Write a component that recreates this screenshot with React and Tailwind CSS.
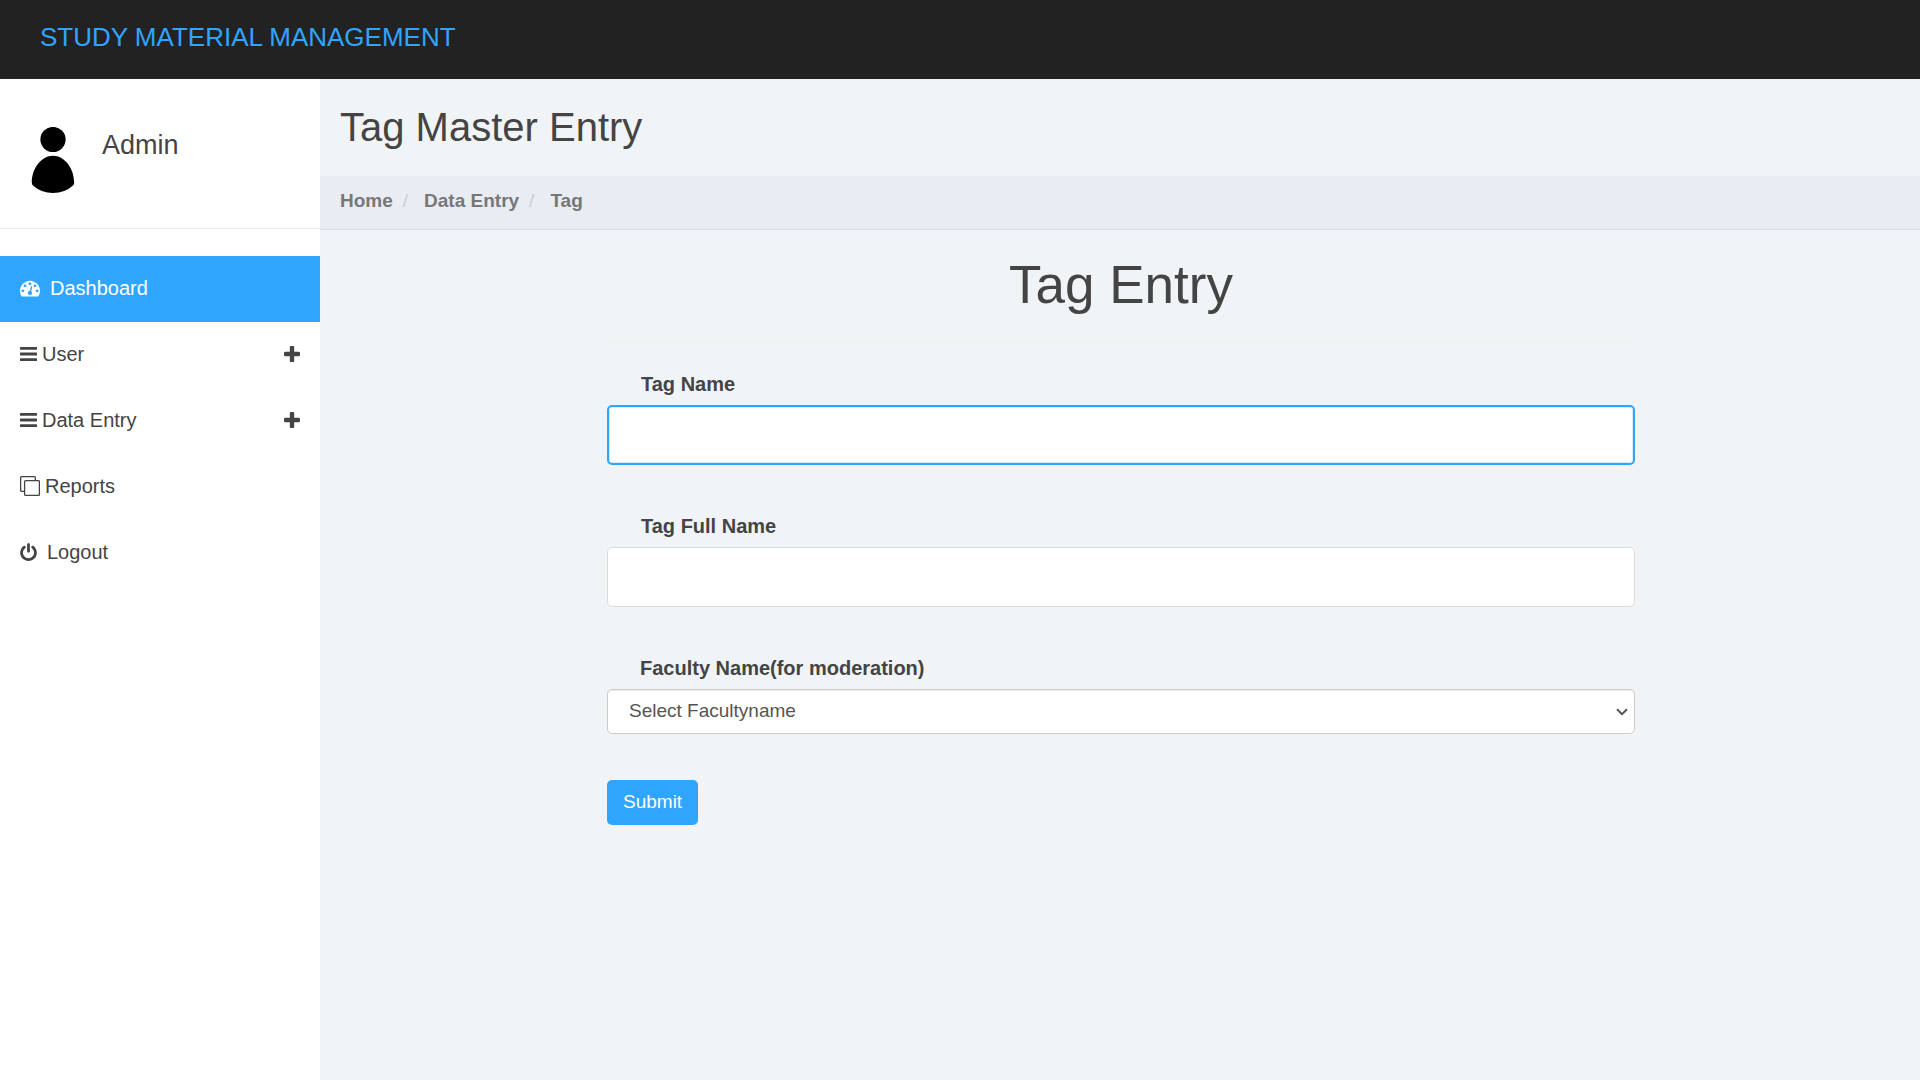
import React from "react";

function DashboardIcon() {
  return (
    <svg viewBox="0 0 1792 1792" className="mr-2.5 size-5 fill-current" aria-hidden="true">
      <path d="M384 1152q0-53-37.5-90.5t-90.5-37.5-90.5 37.5-37.5 90.5 37.5 90.5 90.5 37.5 90.5-37.5 37.5-90.5zm192-448q0-53-37.5-90.5t-90.5-37.5-90.5 37.5-37.5 90.5 37.5 90.5 90.5 37.5 90.5-37.5 37.5-90.5zm428 481l101-382q6-26-7.5-48.5t-38.5-29.5-48 6.5-30 39.5l-101 382q-60 5-107 43.5t-63 98.5q-20 77 20 146t117 89 146-20 89-117q16-60-6-117t-72-91zm660-33q0-53-37.5-90.5t-90.5-37.5-90.5 37.5-37.5 90.5 37.5 90.5 90.5 37.5 90.5-37.5 37.5-90.5zm-640-640q0-53-37.5-90.5t-90.5-37.5-90.5 37.5-37.5 90.5 37.5 90.5 90.5 37.5 90.5-37.5 37.5-90.5zm448 192q0-53-37.5-90.5t-90.5-37.5-90.5 37.5-37.5 90.5 37.5 90.5 90.5 37.5 90.5-37.5 37.5-90.5zm320 448q0 261-141 483-19 29-54 29h-1402q-35 0-54-29-141-221-141-483 0-182 71-348t191-286 286-191 348-71 348 71 286 191 191 286 71 348z" />
    </svg>
  );
}

function BarsIcon() {
  return (
    <svg viewBox="0 0 17 14" className="mr-[5px] h-3.5 w-[17px] fill-current" aria-hidden="true">
      <rect y="0" width="17" height="2.8" rx="0.5" />
      <rect y="5.6" width="17" height="2.8" rx="0.5" />
      <rect y="11.2" width="17" height="2.8" rx="0.5" />
    </svg>
  );
}

function PlusIcon() {
  return (
    <svg viewBox="192 128 1408 1408" className="ml-auto size-4 fill-current" aria-hidden="true">
      <path d="M1600 736v192q0 40-28 68t-68 28h-416v416q0 40-28 68t-68 28h-192q-40 0-68-28t-28-68v-416h-416q-40 0-68-28t-28-68v-192q0-40 28-68t68-28h416v-416q0-40 28-68t68-28h192q40 0 68 28t28 68v416h416q40 0 68 28t28 68z" />
    </svg>
  );
}

function CloneIcon() {
  return (
    <svg viewBox="0 0 20 20" className="mr-[5px] size-5 fill-none stroke-current" strokeWidth="1.3" aria-hidden="true">
      <path d="M4 15.3H1.8Q.6 15.3.6 14.1V1.8Q.6.6 1.8.6H14.1Q15.3.6 15.3 1.8V4" />
      <rect x="4.6" y="4.6" width="14.8" height="14.8" rx="1" />
    </svg>
  );
}

function PowerIcon() {
  return (
    <svg viewBox="128 0 1536 1664" className="mr-2.5 h-[18px] w-[17px] fill-current" aria-hidden="true">
      <path d="M1664 896q0 156-61 298t-164 245-245 164-298 61-298-61-245-164-164-245-61-298q0-182 80.5-343t226.5-270q43-32 95.5-25t83.5 50q32 42 24.5 94.5t-49.5 84.5q-98 74-151.5 181t-53.5 228q0 104 40.5 198.5t109.5 163.5 163.5 109.5 198.5 40.5 198.5-40.5 163.5-109.5 109.5-163.5 40.5-198.5q0-121-53.5-228t-151.5-181q-42-32-49.5-84.5t24.5-94.5q31-43 84-50t95 25q146 109 226.5 270t80.5 343zm-640-768v640q0 52-38 90t-90 38-90-38-38-90v-640q0-52 38-90t90-38 90 38 38 90z" />
    </svg>
  );
}

function Avatar() {
  return (
    <svg viewBox="0 0 44 66" className="h-[66px] w-11" aria-hidden="true">
      <circle cx="22" cy="12.5" r="12.6" />
      <path d="M22 28.8C34 28.8 43.2 42 43.2 55.5Q43.2 57.5 42 58.6Q34 66 22 66Q10 66 2 58.6Q.8 57.5.8 55.5C.8 42 10 28.8 22 28.8Z" />
    </svg>
  );
}

const menu = [
  { label: "Dashboard", Icon: DashboardIcon, active: true },
  { label: "User", Icon: BarsIcon, expandable: true },
  { label: "Data Entry", Icon: BarsIcon, expandable: true },
  { label: "Reports", Icon: CloneIcon },
  { label: "Logout", Icon: PowerIcon },
];

function Sidebar() {
  return (
    <aside className="w-80 shrink-0 bg-white">
      <div className="flex border-b border-[#e9ecf2] px-[31px] pt-12 pb-[35px]">
        <Avatar />
        <div className="ml-[27px] pt-0.5 text-[27px] leading-8">Admin</div>
      </div>
      <nav className="mt-[27px]">
        <ul>
          {menu.map(({ label, Icon, active, expandable }) => (
            <li key={label}>
              <a
                href="#"
                className={
                  active
                    ? "flex h-[66px] items-center bg-[#30a5ff] px-5 pb-0.5 text-xl text-white"
                    : "flex h-[66px] items-center px-5 pb-0.5 text-xl"
                }
              >
                <Icon />
                {label}
                {expandable && <PlusIcon />}
              </a>
            </li>
          ))}
        </ul>
      </nav>
    </aside>
  );
}

function TextField({ id, label, active }) {
  return (
    <div className="mb-12">
      <label htmlFor={id} className="mb-[7px] block pl-[34px] text-xl leading-[27px] font-bold">
        {label}
      </label>
      <input
        id={id}
        type="text"
        className={
          active
            ? "block h-[60px] w-full rounded-[5px] border-2 border-[#30a5ff] bg-white px-5 text-[19px] shadow-[inset_0_0_0_1px_#d6edff] outline-none"
            : "block h-[60px] w-full rounded-[5px] border border-[#dddddd] bg-white px-5 text-[19px] outline-none"
        }
      />
    </div>
  );
}

export default function App() {
  return (
    <div className="flex min-h-screen flex-col bg-[#f1f4f7] font-['Liberation_Sans',Arial,sans-serif] text-[#444444]">
      <header className="h-[79px] bg-[#222222] px-10 pt-5">
        <a href="#" className="text-[26px] leading-[34px] text-[#30a5ff]">
          STUDY MATERIAL MANAGEMENT
        </a>
      </header>
      <div className="flex grow">
        <Sidebar />
        <main className="min-w-0 grow">
          <h2 className="px-5 pt-6 pb-[25px] text-[40px] leading-[48px]">Tag Master Entry</h2>
          <nav aria-label="Breadcrumb" className="border-b border-[#d9dde6] bg-[#e9ecf2] px-5">
            <ol className="flex h-[53px] items-center pb-0.5 text-[19px] font-bold text-[#777777]">
              <li><a href="#">Home</a></li>
              <li className="mr-4 ml-2.5 font-normal text-[#cccccc]" aria-hidden="true">/</li>
              <li><a href="#">Data Entry</a></li>
              <li className="mr-4 ml-2.5 font-normal text-[#cccccc]" aria-hidden="true">/</li>
              <li>Tag</li>
            </ol>
          </nav>
          <form className="pr-[285px] pl-[287px]" onSubmit={(e) => e.preventDefault()}>
            <h1 className="mb-7 border-b border-[#eeeeee] pt-[25px] pb-[27px] text-center text-[53px] leading-[60px]">
              Tag Entry
            </h1>
            <TextField id="tag-name" label="Tag Name" active />
            <TextField id="tag-full-name" label="Tag Full Name" />
            <label htmlFor="faculty" className="mb-[7px] block pl-[33px] text-xl leading-[27px] font-bold">
              Faculty Name(for moderation)
            </label>
            <div className="relative mb-[46px]">
              <select
                id="faculty"
                className="block h-[45px] w-full appearance-none rounded-[5px] border border-[#cccccc] bg-white pr-12 pl-[21px] text-[19px] text-[#555555] shadow-[inset_0_1px_1px_rgba(0,0,0,0.075)] outline-none"
              >
                <option>Select Facultyname</option>
              </select>
              <svg
                viewBox="0 0 12 8"
                className="pointer-events-none absolute top-[19px] right-[7px] h-2 w-3 fill-none stroke-[#555555]"
                strokeWidth="2"
                aria-hidden="true"
              >
                <path d="M1 1.2L6 6.2L11 1.2" />
              </svg>
            </div>
            <button type="submit" className="h-[45px] rounded-[5px] bg-[#30a5ff] px-4 text-[19px] text-white">
              Submit
            </button>
          </form>
        </main>
      </div>
    </div>
  );
}
